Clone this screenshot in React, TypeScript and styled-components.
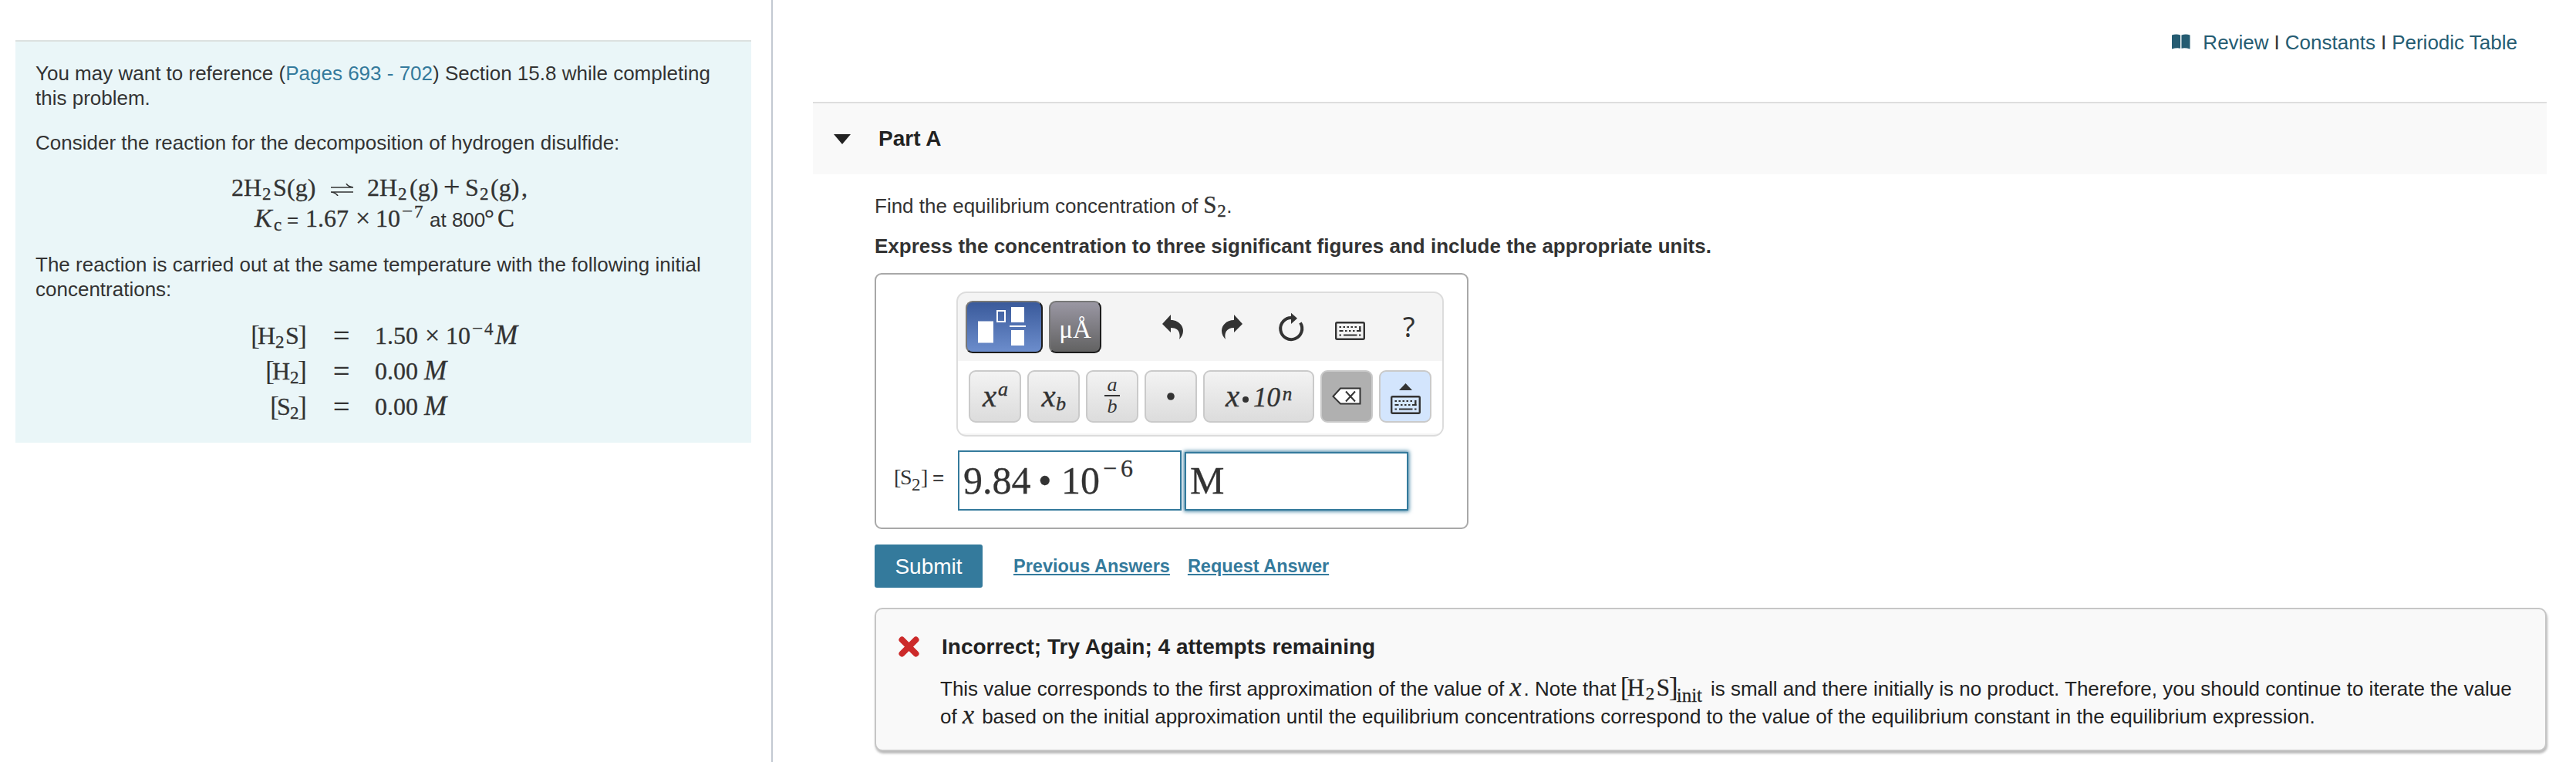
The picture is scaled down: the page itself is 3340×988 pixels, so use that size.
import styled, { createGlobalStyle, css } from "styled-components";

const GlobalStyle = createGlobalStyle`
  * {
    box-sizing: border-box;
  }
  body {
    margin: 0;
    background: #fff;
    color: #333;
    font-family: "Liberation Sans", Arial, sans-serif;
    font-size: 26px;
    line-height: 32px;
  }
  p {
    margin: 0;
  }
  a {
    text-decoration: none;
    cursor: pointer;
  }
`;

const Page = styled.div`
  display: flex;
  width: 3340px;
  height: 988px;
  overflow: hidden;
`;

const Side = styled.aside`
  width: 1002px;
  padding: 52px 26px 0 20px;
  border-right: 2px solid #c3c9d2;
`;

const Intro = styled.section`
  height: 522px;
  padding: 25px 26px 0;
  border-top: 2px solid #dce1e0;
  background: #eaf6f8;
`;

const Text = styled.p<{ $gap?: number }>`
  margin-bottom: ${({ $gap }) => $gap ?? 0}px;
  white-space: nowrap;
`;

const Reaction = styled.div`
  margin-top: 24px;
`;

const PageLink = styled.a`
  color: #347a9c;
`;

/* formulas: every symbol takes a fixed advance width */
const Formula = styled.div<{ $indent?: number }>`
  display: flex;
  align-items: baseline;
  height: 40px;
  padding-left: ${({ $indent }) => $indent ?? 0}px;
  font-family: "Liberation Serif", serif;
  font-size: 32px;
  line-height: 40px;
  white-space: nowrap;
  -webkit-text-stroke: 0.3px #333;
`;

const Sym = styled.span<{
  $w: number;
  $kind?: "sub" | "sup" | "sans";
  $italic?: boolean;
  $size?: number;
  $up?: number;
}>`
  display: inline-block;
  flex: none;
  width: ${({ $w }) => $w}px;
  ${({ $italic }) => $italic && "font-style: italic;"}
  ${({ $kind }) =>
    $kind === "sub" &&
    css`
      font-size: 23px;
      line-height: 1px;
      transform: translateY(5px);
    `}
  ${({ $kind }) =>
    $kind === "sup" &&
    css`
      font-size: 23px;
      line-height: 1px;
      transform: translateY(-12px);
    `}
  ${({ $kind }) =>
    $kind === "sans" &&
    css`
      font-family: "Liberation Sans", Arial, sans-serif;
      font-size: 26px;
      -webkit-text-stroke: 0;
    `}
  ${({ $size }) => $size && `font-size: ${$size}px; line-height: 1px;`}
  ${({ $up }) => $up && `transform: translateY(${-$up}px);`}
`;

const Bracket = styled.span<{ $open?: boolean }>`
  display: inline-block;
  flex: none;
  width: ${({ $open }) => ($open ? 7 : 9)}px;
  font-size: 36px;
  line-height: 1px;
  text-indent: ${({ $open }) => ($open ? -2 : -1)}px;
  transform: translateY(1px);
  -webkit-text-stroke: 0;
`;

const InlineMath = styled.span`
  font-family: "Liberation Serif", serif;
  font-size: 31px;
  line-height: 1px;
  -webkit-text-stroke: 0.3px #333;
`;

const Arrows = styled.svg`
  display: block;
  flex: none;
  align-self: center;
  margin: 6px 17px 0 19px;
`;

const Table = styled.div`
  display: grid;
  grid-template-columns: 350px 90px 1fr;
  grid-auto-rows: 46px;
  margin-top: 24px;
`;

const Left = styled(Formula)`
  justify-content: flex-end;
`;

const Equals = styled(Formula)`
  padding-left: 36px;
  font-size: 38px;
`;

const Main = styled.main`
  flex: 1;
  padding: 0 38px 0 52px;
`;

const TopLinks = styled.nav`
  display: flex;
  align-items: center;
  justify-content: flex-end;
  height: 132px;
  padding: 0 38px 23px 0;
  color: #333;
  svg {
    margin-right: 16px;
  }
  a {
    color: #255c72;
  }
  span {
    margin: 0 7px;
  }
`;

const PartHeader = styled.header`
  display: flex;
  align-items: center;
  gap: 36px;
  height: 94px;
  padding-left: 27px;
  border-top: 2px solid #dedede;
  background: #f9f9f9;
  color: #222;
  font-size: 28px;
  font-weight: bold;
`;

const PartBody = styled.div`
  padding: 25px 0 0 80px;
`;

const Question = styled.p`
  height: 52px;
  white-space: nowrap;
`;

const Instruction = styled(Question)`
  height: 51px;
  font-weight: bold;
`;

const AnswerBox = styled.div`
  width: 770px;
  height: 332px;
  padding: 22px 0 0 23px;
  border: 2px solid #a8a8a8;
  border-radius: 9px;
`;

const Palette = styled.div`
  width: 632px;
  height: 188px;
  margin-left: 81px;
  border: 2px solid #dcdcdc;
  border-radius: 13px;
  background: #f4f4f4;
  overflow: hidden;
`;

const ToolRow = styled.div`
  display: flex;
  gap: 8px;
  height: 88px;
  padding: 10px;
`;

const KeyRow = styled.div`
  display: flex;
  gap: 8px;
  height: 94px;
  padding: 12px 14px;
  background: #fff;
`;

const ModeButton = styled.button<{ $w: number; $active?: boolean }>`
  width: ${({ $w }) => $w}px;
  height: 68px;
  padding: 0;
  border: 2px solid;
  border-color: #777 #1c1c1c #1c1c1c #777;
  border-radius: 9px;
  background: ${({ $active }) =>
    $active
      ? "linear-gradient(#3a5a9b, #6c8dcc)"
      : "linear-gradient(#9a97a3, #626262)"};
  color: #fff;
  font-family: "Liberation Serif", serif;
  font-size: 33px;
  line-height: 70px;
  svg {
    display: block;
  }
`;

const ToolIcons = styled.svg`
  display: block;
  margin: 3px 0 0 60px;
`;

const Key = styled.button<{ $w?: number; $bg?: string }>`
  display: flex;
  align-items: baseline;
  justify-content: center;
  width: ${({ $w }) => $w ?? 68}px;
  height: 68px;
  padding: 0;
  border: 2px solid #cacaca;
  border-radius: 9px;
  background: ${({ $bg }) => $bg ?? "linear-gradient(#f3f3f3, #dcdcdc)"};
  color: #333;
  font-family: "Liberation Serif", serif;
  font-size: 41px;
  font-style: italic;
  line-height: 62px;
  -webkit-text-stroke: 0.4px #333;
  svg {
    display: block;
    align-self: center;
  }
`;

const Dot = styled.i`
  width: 8px;
  height: 8px;
  margin: 0 4px 0 3px;
  border-radius: 50%;
  background: #333;
  transform: translateY(-5px);
`;

const Fraction = styled.span`
  display: flex;
  flex-direction: column;
  align-self: center;
  width: 20px;
  font-size: 26px;
  line-height: 26px;
  text-align: center;
  -webkit-text-stroke: 0;
  span:first-child {
    height: 26px;
    line-height: 22px;
    border-bottom: 2px solid #333;
  }
`;

const KeyboardUp = styled.svg`
  margin-top: 6px;
`;

const AnswerRow = styled.div`
  display: flex;
  gap: 4px;
  margin-top: 18px;
`;

const AnswerLabel = styled.div`
  display: flex;
  align-items: baseline;
  width: 79px;
  height: 78px;
  font-family: "Liberation Serif", serif;
  font-size: 28px;
  line-height: 69px;
`;

const Field = styled.div<{ $focus?: boolean }>`
  display: flex;
  align-items: baseline;
  width: 290px;
  height: ${({ $focus }) => ($focus ? 76 : 78)}px;
  margin-top: ${({ $focus }) => ($focus ? 2 : 0)}px;
  padding-left: 5px;
  border: 2px solid #347a9c;
  box-shadow: ${({ $focus }) => ($focus ? "0 0 5px 1px #347a9c" : "none")};
  font-family: "Liberation Serif", serif;
  font-size: 50px;
  line-height: ${({ $focus }) => ($focus ? 70 : 74)}px;
  -webkit-text-stroke: 0.3px #333;
`;

const Actions = styled.div`
  display: flex;
  align-items: center;
  height: 56px;
  margin: 20px 0 26px;
`;

const Submit = styled.button`
  width: 140px;
  height: 56px;
  margin-right: 40px;
  padding-top: 2px;
  border: 0;
  border-radius: 3px;
  background: #347a9c;
  color: #fff;
  font-family: inherit;
  font-size: 28px;
`;

const ActionLink = styled.a`
  margin-right: 23px;
  color: #347a9c;
  font-size: 23.5px;
  font-weight: bold;
  text-decoration: underline;
  text-decoration-thickness: 2px;
  text-underline-offset: 2px;
`;

const Feedback = styled.section`
  height: 186px;
  padding: 31px 0 0 83px;
  border: 2px solid #c6c6c6;
  border-radius: 10px;
  background: #f9f9f9;
  box-shadow: 1px 3px 3px #bbb;
  color: #222;
  white-space: nowrap;
`;

const FeedbackTitle = styled.h2`
  display: flex;
  align-items: center;
  gap: 29px;
  height: 36px;
  margin: 0 0 18px -54px;
  font-size: 28px;
  svg {
    margin-bottom: 2px;
  }
`;

const FeedbackLine = styled.p`
  height: 36px;
  line-height: 36px;
`;

const Keyboard = ({ x, y }: { x: number; y: number }) => (
  <g transform={`translate(${x} ${y})`}>
    <rect x="1.2" y="1.2" width="36.6" height="21.6" rx="1.5" fill="none" stroke="#333" strokeWidth="2.4" />
    <path
      d="M5.500 7h2.500M10.500 7h2.500M15.500 7h2.500M20.500 7h2.500M25.500 7h2.500M5.500 12h5M13 12h2.500M18 12h2.500M23 12h2.500M28 12h5.500M5.500 17.500h2.500M11 17.500h17.500M31 17.500h2.500"
      stroke="#333"
      strokeWidth="2.2"
    />
    <path d="M32.300 5.900v7" stroke="#333" strokeWidth="2.400" />
  </g>
);

const Row = ({ el }: { el: string }) => (
  <>
    <Left>
      <Bracket $open>[</Bracket>
      <Sym $w={el === "H" ? 23 : 17}>{el}</Sym>
      <Sym $w={11} $kind="sub">2</Sym>
      <Bracket>]</Bracket>
    </Left>
    <Equals>=</Equals>
    <Formula>
      <Sym $w={64}>0.00</Sym>
      <Sym $w={30} $italic $size={35}>M</Sym>
    </Formula>
  </>
);

function ProblemIntro() {
  return (
    <Side>
      <Intro>
        <Text>
          You may want to reference (<PageLink>Pages 693 - 702</PageLink>) Section 15.8 while completing
        </Text>
        <Text $gap={26}>this problem.</Text>
        <Text $gap={22}>Consider the reaction for the decomposition of hydrogen disulfide:</Text>
        <Formula $indent={254}>
          <Sym $w={16}>2</Sym>
          <Sym $w={24}>H</Sym>
          <Sym $w={14} $kind="sub">2</Sym>
          <Sym $w={18}>S</Sym>
          <Sym $w={38}>(g)</Sym>
          <Arrows width="30" height="16" viewBox="0 0 30 16">
            <path d="M0 5h29M20 0q2 4 9 5M29 11H0M9 16q-2-4-9-5" fill="none" stroke="#333" strokeWidth="1.600" />
          </Arrows>
          <Sym $w={16}>2</Sym>
          <Sym $w={24}>H</Sym>
          <Sym $w={15} $kind="sub">2</Sym>
          <Sym $w={44}>(g)</Sym>
          <Sym $w={28} $size={38} $up={-1}>+</Sym>
          <Sym $w={19}>S</Sym>
          <Sym $w={14} $kind="sub">2</Sym>
          <Sym $w={40}>(g)</Sym>
          <Sym $w={9}>,</Sym>
        </Formula>
        <Formula $indent={284}>
          <Sym $w={25} $italic $size={34}>K</Sym>
          <Sym $w={17} $kind="sub">c</Sym>
          <Sym $w={24} $kind="sans">=</Sym>
          <Sym $w={65}>1.67</Sym>
          <Sym $w={26} $size={34}>×</Sym>
          <Sym $w={34}>10</Sym>
          <Sym $w={16} $kind="sup" $size={25}>−</Sym>
          <Sym $w={20} $kind="sup">7</Sym>
          <Sym $w={71} $kind="sans">at 800</Sym>
          <Sym $w={17}>°</Sym>
          <Sym $w={22} $size={33}>C</Sym>
        </Formula>
        <Reaction>
          <Text>The reaction is carried out at the same temperature with the following initial</Text>
          <Text>concentrations:</Text>
        </Reaction>
        <Table>
          <Left>
            <Bracket $open>[</Bracket>
            <Sym $w={23}>H</Sym>
            <Sym $w={13} $kind="sub">2</Sym>
            <Sym $w={17}>S</Sym>
            <Bracket>]</Bracket>
          </Left>
          <Equals>=</Equals>
          <Formula>
            <Sym $w={65}>1.50</Sym>
            <Sym $w={27} $size={34}>×</Sym>
            <Sym $w={34}>10</Sym>
            <Sym $w={16} $kind="sup" $size={25}>−</Sym>
            <Sym $w={14} $kind="sup">4</Sym>
            <Sym $w={30} $italic $size={35}>M</Sym>
          </Formula>
          <Row el="H" />
          <Row el="S" />
        </Table>
      </Intro>
    </Side>
  );
}

function MathPalette() {
  return (
    <Palette>
      <ToolRow>
        <ModeButton $w={100} $active>
          <svg width="96" height="64" viewBox="0 0 96 64" fill="#fff">
            <rect x="14" y="24.500" width="20" height="28" />
            <rect x="39" y="11" width="10" height="14" fill="none" stroke="#fff" strokeWidth="2" />
            <rect x="57" y="6" width="17" height="20" />
            <rect x="55" y="30" width="21" height="2" />
            <rect x="57" y="36" width="17" height="20" />
          </svg>
        </ModeButton>
        <ModeButton $w={68}>μÅ</ModeButton>
        <ToolIcons width="350" height="64" viewBox="1496 393 350 64" fill="#333">
          <path d="M1507 420l11-12v7c10 0 16 7 16 14 0 4-2 8-5 11 2-8-1-15-11-15v6z" />
          <path d="M1611 420l-11-12v7c-10 0-16 7-16 14 0 4 2 8 5 11-2-8 1-15 11-15v6z" />
          <path d="M1686 418.500a14 14 0 1 1-11-6.400" fill="none" stroke="#333" strokeWidth="4" />
          <path d="M1674 405.700l8 7-8 7.300z" />
          <Keyboard x={1731} y={417} />
          <text x="1819" y="437" fontSize="36" fontFamily="Noto Sans, sans-serif">?</text>
        </ToolIcons>
      </ToolRow>
      <KeyRow>
        <Key>
          <Sym $w={21}>x</Sym>
          <Sym $w={14} $size={26} $up={14}>a</Sym>
        </Key>
        <Key>
          <Sym $w={19}>x</Sym>
          <Sym $w={13} $size={26} $up={-5}>b</Sym>
        </Key>
        <Key>
          <Fraction>
            <span>a</span>
            <span>b</span>
          </Fraction>
        </Key>
        <Key>
          <svg width="10" height="10">
            <circle cx="5" cy="5" r="4.800" fill="#333" />
          </svg>
        </Key>
        <Key $w={144}>
          <Sym $w={20}>x</Sym>
          <Dot />
          <Sym $w={39} $size={35}>10</Sym>
          <Sym $w={14} $size={25} $up={8}>n</Sym>
        </Key>
        <Key $bg="#b0b0b0">
          <svg width="38" height="24" viewBox="0 0 38 24">
            <path d="M1.500 12L11 1.500h25.500v20H11z" fill="#fff" stroke="#333" strokeWidth="2" />
            <path d="M18 5.500l12 13M30 5.500l-12 13" stroke="#333" strokeWidth="2" />
          </svg>
        </Key>
        <Key $bg="#d3e5fd">
          <KeyboardUp width="39" height="40" viewBox="0 0 39 40">
            <path d="M11 9L19.500 0 28 9z" fill="#333" />
            <Keyboard x={0} y={16} />
          </KeyboardUp>
        </Key>
      </KeyRow>
    </Palette>
  );
}

function App() {
  return (
    <Page>
      <GlobalStyle />
      <ProblemIntro />
      <Main>
        <TopLinks>
          <svg width="24" height="21" viewBox="0 0 25 21" fill="#255c72">
            <path d="M0 1q6-2 11.500 0v18q-5.500-1-11.500 1zM13 1q6-2 11.500 0v19q-6-2-11.500-1z" />
          </svg>
          <a>Review</a>
          <span>I</span>
          <a>Constants</a>
          <span>I</span>
          <a>Periodic Table</a>
        </TopLinks>
        <PartHeader>
          <svg width="22" height="13" viewBox="0 0 22 13">
            <path d="M0 0h22L11 13z" fill="#222" />
          </svg>
          Part A
        </PartHeader>
        <PartBody>
          <Question>
            Find the equilibrium concentration of{" "}
            <InlineMath>
              <Sym $w={18}>S</Sym>
              <Sym $w={12} $kind="sub">2</Sym>
            </InlineMath>
            .
          </Question>
          <Instruction>
            Express the concentration to three significant figures and include the appropriate units.
          </Instruction>
          <AnswerBox>
            <MathPalette />
            <AnswerRow>
              <AnswerLabel>
                <Sym $w={8}>[</Sym>
                <Sym $w={15}>S</Sym>
                <Sym $w={12} $kind="sub" $up={-8}>2</Sym>
                <Sym $w={15}>]</Sym>
                <Sym $w={16} $kind="sans">=</Sym>
              </AnswerLabel>
              <Field>
                <Sym $w={97}>9.84</Sym>
                <Sym $w={30}>•</Sym>
                <Sym $w={54}>10</Sym>
                <Sym $w={23} $size={32} $up={22}>−</Sym>
                <Sym $w={16} $size={32} $up={22}>6</Sym>
              </Field>
              <Field $focus>M</Field>
            </AnswerRow>
          </AnswerBox>
          <Actions>
            <Submit>Submit</Submit>
            <ActionLink>Previous Answers</ActionLink>
            <ActionLink>Request Answer</ActionLink>
          </Actions>
          <Feedback>
            <FeedbackTitle>
              <svg width="27" height="27" viewBox="0 0 27 27">
                <path d="M4.500 4.500l18 18M22.500 4.500l-18 18" stroke="#cc2a2a" strokeWidth="8" strokeLinecap="round" />
              </svg>
              Incorrect; Try Again; 4 attempts remaining
            </FeedbackTitle>
            <FeedbackLine>
              This value corresponds to the first approximation of the value of{" "}
              <InlineMath>
                <Sym $w={18} $italic $size={34}>x</Sym>
              </InlineMath>
              . Note that{" "}
              <InlineMath>
                <Bracket $open>[</Bracket>
                <Sym $w={24}>H</Sym>
                <Sym $w={14} $kind="sub">2</Sym>
                <Sym $w={17}>S</Sym>
                <Bracket>]</Bracket>
                <Sym $w={37} $size={25} $up={-8}>init</Sym>
              </InlineMath>{" "}
              is small and there initially is no product. Therefore, you should continue to iterate the value
            </FeedbackLine>
            <FeedbackLine>
              of{" "}
              <InlineMath>
                <Sym $w={18} $italic $size={34}>x</Sym>
              </InlineMath>{" "}
              based on the initial approximation until the equilibrium concentrations correspond to the value of the
              equilibrium constant in the equilibrium expression.
            </FeedbackLine>
          </Feedback>
        </PartBody>
      </Main>
    </Page>
  );
}

export default App;
